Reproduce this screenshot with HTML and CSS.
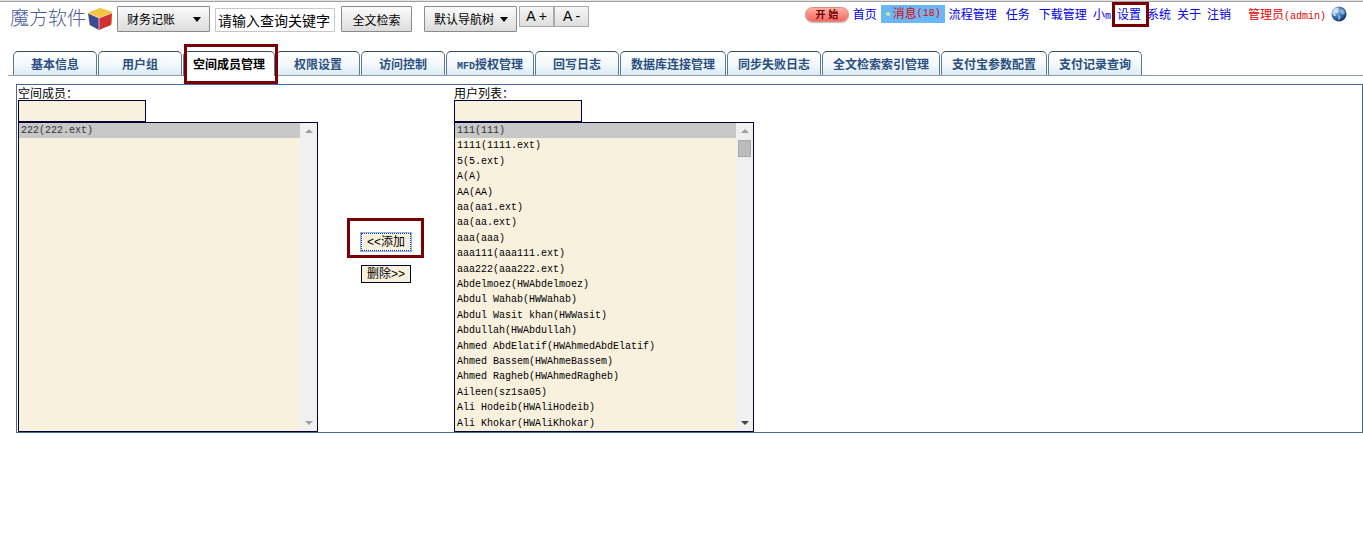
FILE: index.html
```html
<!DOCTYPE html>
<html lang="zh-CN">
<head>
    <meta charset="UTF-8">
    <meta name="viewport" content="width=device-width, initial-scale=1.0">
    <title>空间成员管理</title>
    <link rel="stylesheet" href="styles.css">
</head>
<body>
    <header class="header">
        <div class="tools">
            <!-- 标志 -->
            <a href="#" class="logo">
                <span>魔方软件</span>
                <svg width="24" height="22" viewBox="0 0 24 22">
                    <path d="M12 0L24 4L24 16L11 22L1 17L0 5Z" fill="#f3c443"/>
                    <path d="M0 5L11 10V22L2 17Z" fill="#39499b"/>
                    <path d="M11 10L24 5L23 17L11 22Z" fill="#cf3033"/>
                    <path d="M12 0L24 4L11 10L0 5Z" fill="#f3c443"/>
                    <path d="M0 5L11 10L24 5M11 10V22" fill="none" stroke="#fbe9c0" stroke-width=".7"/>
                </svg>
            </a>
            <span class="dropdown space">
                <select aria-label="空间">
                    <option>财务记账</option>
                </select>
            </span>
            <input type="text" class="search" placeholder="请输入查询关键字" aria-label="查询关键字">
            <button type="button" class="btn">全文检索</button>
            <span class="dropdown tree">
                <select aria-label="导航树">
                    <option>默认导航树</option>
                </select>
            </span>
            <div class="zoom">
                <button type="button">A +</button>
                <button type="button">A -</button>
            </div>
        </div>

        <!-- 顶部导航 -->
        <nav class="nav">
            <div class="nav-group nav-main">
                <button type="button" class="start">开 始</button>
                <a href="#">首页</a>
                <a href="#" class="message"><i></i>消息<span class="latin">(18)</span></a>
                <a href="#">流程管理</a>
            </div>
            <div class="nav-group nav-work">
                <a href="#">任务</a>
                <a href="#">下载管理</a>
            </div>
            <div class="nav-group nav-sys">
                <a href="#">小<span class="latin">m</span></a>
                <a href="#" class="mark">设置</a>
                <a href="#">系统</a>
                <a href="#">关于</a>
                <a href="#">注销</a>
            </div>
            <div class="nav-group nav-user">
                <a href="#" class="user">管理员<span class="latin">(admin)</span></a>
                <svg width="16" height="16" viewBox="0 0 16 16">
                    <defs>
                        <radialGradient id="sea" cx=".35" cy=".3" r=".75">
                            <stop offset="0" stop-color="#a9cdf0"/>
                            <stop offset=".5" stop-color="#3f78b8"/>
                            <stop offset="1" stop-color="#12315f"/>
                        </radialGradient>
                    </defs>
                    <circle cx="8" cy="8" r="7.5" fill="url(#sea)"/>
                    <path d="M3 3Q6 1 8 2L7 4L8 5L6 7L4 7L5 10L3 10L1 7Z" fill="#dbe9f7" opacity=".8"/>
                    <path d="M10 3L13 4L14 7L12 9L10 7L9 5ZM7 9L10 10L9 13L7 14Z" fill="#a8c8e6" opacity=".7"/>
                </svg>
            </div>
        </nav>
    </header>

    <!-- 标签页 -->
    <nav class="tabs">
        <a href="#">基本信息</a>
        <a href="#">用户组</a>
        <a href="#" class="active mark">空间成员管理</a>
        <a href="#">权限设置</a>
        <a href="#">访问控制</a>
        <a href="#"><span class="latin">MFD</span>授权管理</a>
        <a href="#">回写日志</a>
        <a href="#">数据库连接管理</a>
        <a href="#">同步失败日志</a>
        <a href="#">全文检索索引管理</a>
        <a href="#">支付宝参数配置</a>
        <a href="#">支付记录查询</a>
    </nav>

    <main class="panel">
        <!-- 空间成员 -->
        <div class="column">
            <label for="member_filter">空间成员：</label>
            <input type="text" id="member_filter" class="filter">
            <div class="list">
                <select size="20" aria-label="空间成员">
                    <option selected>222(222.ext)</option>
                </select>
                <div class="scroll"><i class="up"></i><i class="down"></i></div>
            </div>
        </div>

        <!-- 操作按钮 -->
        <div class="actions">
            <div class="mark">
                <button type="button" class="focused">&lt;&lt;添加</button>
            </div>
            <button type="button">删除&gt;&gt;</button>
        </div>

        <!-- 用户列表 -->
        <div class="column">
            <label for="user_filter">用户列表：</label>
            <input type="text" id="user_filter" class="filter">
            <div class="list">
                <select size="20" aria-label="用户列表">
                    <option selected>111(111)</option>
                    <option>1111(1111.ext)</option>
                    <option>5(5.ext)</option>
                    <option>A(A)</option>
                    <option>AA(AA)</option>
                    <option>aa(aa1.ext)</option>
                    <option>aa(aa.ext)</option>
                    <option>aaa(aaa)</option>
                    <option>aaa111(aaa111.ext)</option>
                    <option>aaa222(aaa222.ext)</option>
                    <option>Abdelmoez(HWAbdelmoez)</option>
                    <option>Abdul Wahab(HWWahab)</option>
                    <option>Abdul Wasit khan(HWWasit)</option>
                    <option>Abdullah(HWAbdullah)</option>
                    <option>Ahmed AbdElatif(HWAhmedAbdElatif)</option>
                    <option>Ahmed Bassem(HWAhmeBassem)</option>
                    <option>Ahmed Ragheb(HWAhmedRagheb)</option>
                    <option>Aileen(sz1sa05)</option>
                    <option>Ali Hodeib(HWAliHodeib)</option>
                    <option>Ali Khokar(HWAliKhokar)</option>
                </select>
                <div class="scroll more"><i class="up"></i><b class="thumb"></b><i class="down"></i></div>
            </div>
        </div>
    </main>
</body>
</html>
```
FILE: styles.css
```css
* {
    box-sizing: border-box;
}

body {
    margin: 0;
    background: #fff;
    color: #000;
    font-family: "Liberation Sans", "Noto Sans CJK SC", sans-serif;
    font-size: 12px;
}

button,
input,
select {
    margin: 0;
    font-family: inherit;
    font-size: 12px;
    color: #000;
}

a {
    text-decoration: none;
}

.latin {
    font-family: "Liberation Mono", monospace;
    font-size: 10px;
}

/* 红色标注框 */
.mark {
    position: relative;
}

.mark::after {
    content: "";
    position: absolute;
    inset: -4px -8px -4px -4px;
    border: 3px solid #780004;
    pointer-events: none;
    z-index: 2;
}

/* 顶部 */
.header {
    display: flex;
    justify-content: space-between;
    align-items: flex-start;
    height: 51px;
    border-top: 1px solid #e4e4e4;
    box-shadow: inset 0 1px #a0a0a0;
    white-space: nowrap;
}

.tools {
    display: flex;
    padding: 5px 0 0 10px;
}

.logo {
    display: flex;
    gap: 2px;
    align-items: center;
    height: 26px;
    margin-right: 5px;
    color: #4b5c96;
    font-size: 19px;
    font-weight: 300;
    line-height: 22px;
}

.dropdown {
    position: relative;
    display: inline-block;
}

.dropdown select,
.btn {
    height: 26px;
    padding: 0 9px;
    border: 1px solid #8a8a8a;
    border-radius: 1px;
    background: linear-gradient(#fbfbfb, #dcdcdc);
    appearance: none;
}

.dropdown select {
    width: 93px;
    padding-top: 1px;
}

.dropdown::after {
    content: "";
    position: absolute;
    top: 11px;
    right: 9px;
    border: 4px solid transparent;
    border-top: 5px solid #000;
    border-bottom: 0;
    pointer-events: none;
}

.search {
    width: 120px;
    height: 24px;
    margin: 2px 6px 0 5px;
    padding: 2px 2px 0;
    border: 1px solid #c8c8c8;
    font-size: 14px;
}

.search::placeholder {
    color: #000;
}

.btn {
    width: 71px;
    margin-right: 12px;
}

.zoom {
    display: flex;
    margin-left: 2px;
}

.zoom button {
    width: 35px;
    height: 21px;
    padding: 0 0 2px;
    border: 1px solid #aaa;
    background: linear-gradient(#f6f6f6, #dedede);
    font-size: 14px;
}

.nav {
    display: flex;
    padding: 4px 16px 0 0;
    line-height: 20px;
}

.nav-group {
    display: flex;
    align-items: center;
    height: 18px;
}

.nav a {
    height: 18px;
    color: #0000e0;
}

.nav-main {
    gap: 4px;
    margin-right: 9px;
}

.nav-work {
    gap: 9px;
    margin-right: 6px;
}

.nav-sys {
    gap: 6px;
    margin-right: 17px;
}

.nav-user {
    gap: 5px;
}

.start {
    width: 44px;
    height: 15px;
    padding: 0;
    border: 1px solid #e08a80;
    border-radius: 8px;
    background: linear-gradient(#ffb0a4, #f4695f);
    box-shadow: 0 1px 1px #bbb;
    color: #6d0000;
    font-size: 10px;
    font-weight: bold;
    line-height: 14px;
}

.nav a.message {
    display: flex;
    align-items: center;
    width: 64px;
    padding-left: 5px;
    background: #6ab7f5;
    color: #e60000;
}

.message i {
    width: 4px;
    height: 4px;
    margin-right: 3px;
    border-radius: 2px;
    background: #c9ee9a;
}

.nav a.user {
    color: #e60000;
}

.nav .mark::after {
    inset: -3px -8px -4px -5px;
}

/* 标签页 */
.tabs {
    display: flex;
    gap: 1px;
    margin-left: 8px;
    padding-left: 5px;
    border-bottom: 1px solid #8d9fae;
    white-space: nowrap;
}

.tabs a {
    min-width: 84px;
    height: 24px;
    padding: 0 10px;
    border: 1px solid #5d7a90;
    border-top-color: #34505f;
    border-bottom: 0;
    border-radius: 5px 5px 0 0;
    background: linear-gradient(#fff, #f4f9fc 50%, #dcebf4);
    color: #2a4f80;
    font-weight: bold;
    line-height: 26px;
    text-align: center;
}

.tabs a.active {
    height: 25px;
    margin-bottom: -1px;
    padding: 0 9px;
    background: #fff;
    color: #000;
}

.tabs .mark::after {
    inset: -8px -4px -8px 0;
}

/* 内容区 */
.panel {
    display: flex;
    margin: 8px 0 0 16px;
    padding-left: 1px;
    border: 1px solid #44679f;
}

.column {
    display: flex;
    flex-direction: column;
    align-items: flex-start;
    width: 300px;
}

.column label {
    height: 15px;
    line-height: 18px;
}

.filter {
    width: 128px;
    height: 22px;
    border: 1px solid #000033;
    background: #f8f1de;
}

.list {
    display: flex;
    width: 100%;
    height: 310px;
    border: 1px solid #000033;
    background: #f8f1de;
}

.list select {
    flex: 1;
    padding: 0;
    border: 0;
    border-radius: 0;
    outline: 0;
    background: #f8f1de;
    font-family: "Liberation Mono", monospace;
    font-size: 10px;
    overflow: hidden;
}

.list option {
    height: 15px;
    min-height: 15px;
    padding: 2px 2px 0;
    line-height: 13px;
}

/* 20 行铺满列表高度 */
.list option:nth-child(5n+2),
.list option:nth-child(5n+4) {
    height: 16px;
}

.list option:checked {
    background: #c8c8c8 linear-gradient(#c8c8c8, #c8c8c8);
    color: #333;
}

.scroll {
    display: flex;
    flex-direction: column;
    align-items: center;
    width: 17px;
    padding: 6px 0;
    background: #f0f0f0;
}

.scroll .up,
.scroll .down {
    border: 4px solid transparent;
}

.scroll .up {
    border-top: 0;
    border-bottom-color: #a0a0a0;
}

.scroll .down {
    margin-top: auto;
    border-bottom: 0;
    border-top-color: #a0a0a0;
}

.scroll.more .down {
    border-top-color: #444;
}

.thumb {
    width: 13px;
    height: 17px;
    margin-top: 7px;
    border: 1px solid #a6a6a6;
    background: #bcbcbc;
}

.actions {
    display: flex;
    flex-direction: column;
    align-items: center;
    justify-content: center;
    gap: 14px;
    width: 136px;
    padding-bottom: 2px;
}

.actions button {
    display: block;
    width: 50px;
    height: 18px;
    padding: 0;
    border: 1px solid #000033;
    background: #f8f1de;
    line-height: 16px;
}

.actions button.focused {
    border: 1px dotted #1c3c78;
    outline: 1px solid #8db4ee;
}

.actions .mark::after {
    inset: -15px -13px -7px -14px;
}
```
